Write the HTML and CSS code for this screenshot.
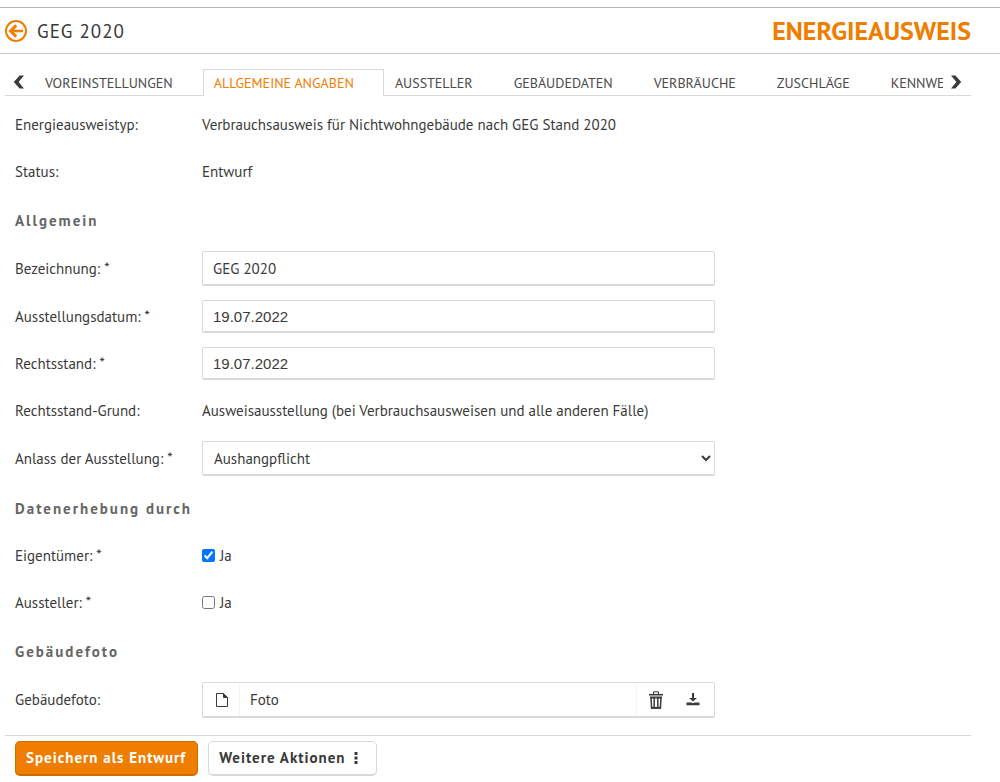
FILE: index.html
```html
<!DOCTYPE html>
<html lang="de">
<head>
    <meta charset="UTF-8">
    <title>Energieausweis</title>
    <link rel="stylesheet" href="styles.css">
</head>
<body>
<header class="page-header">
    <a class="back" href="#" aria-label="Zurück">
        <svg width="22" height="22" viewBox="0 0 22 22" fill="none" stroke="#ef7d00">
            <circle cx="11" cy="11" r="10" stroke-width="2"/>
            <path d="M5.5 11H18" stroke-width="2.6"/>
            <path d="M11.2 5.4L5.6 11l5.6 5.6" stroke-width="3"/>
        </svg>
    </a>
    <h1>GEG 2020</h1>
    <span class="brand">ENERGIEAUSWEIS</span>
</header>
<main>
<nav class="tabs">
    <button type="button" class="scroll prev" aria-label="Vorherige">
        <svg width="12" height="14" viewBox="0 0 12 14" fill="#3a3a3a"><path d="M6.600.5H11L5.600 7l5.400 6.500H6.600L.8 7z"/></svg>
    </button>
    <div class="tab-list">
        <a href="#">VOREINSTELLUNGEN</a>
        <a href="#" class="active">ALLGEMEINE ANGABEN</a>
        <a href="#">AUSSTELLER</a>
        <a href="#">GEBÄUDEDATEN</a>
        <a href="#">VERBRÄUCHE</a>
        <a href="#">ZUSCHLÄGE</a>
        <a href="#">KENNWERTE</a>
    </div>
    <button type="button" class="scroll next" aria-label="Nächste">
        <svg width="12" height="14" viewBox="0 0 12 14" fill="#3a3a3a"><path d="M5.400.5H1L6.400 7 1 13.500h4.400L11.200 7z"/></svg>
    </button>
</nav>
<form id="ausweis">
    <div class="row"><span class="label">Energieausweistyp:</span><span>Verbrauchsausweis für Nichtwohngebäude nach GEG Stand 2020</span></div>
    <div class="row"><span class="label">Status:</span><span>Entwurf</span></div>

    <h2>Allgemein</h2>
    <div class="row"><label class="label" for="bezeichnung">Bezeichnung: *</label><input class="field tall" type="text" id="bezeichnung" value="GEG 2020"></div>
    <div class="row"><label class="label" for="datum">Ausstellungsdatum: *</label><input class="field date" type="text" id="datum" value="19.07.2022"></div>
    <div class="row"><label class="label" for="rechtsstand">Rechtsstand: *</label><input class="field date" type="text" id="rechtsstand" value="19.07.2022"></div>
    <div class="row"><span class="label">Rechtsstand-Grund:</span><span>Ausweisausstellung (bei Verbrauchsausweisen und alle anderen Fälle)</span></div>
    <div class="row"><label class="label" for="anlass">Anlass der Ausstellung: *</label>
        <select class="field tall" id="anlass"><option>Aushangpflicht</option></select>
    </div>

    <h2>Datenerhebung durch</h2>
    <div class="row"><span class="label">Eigentümer: *</span><label class="check"><input type="checkbox" checked>Ja</label></div>
    <div class="row"><span class="label">Aussteller: *</span><label class="check"><input type="checkbox">Ja</label></div>

    <h2>Gebäudefoto</h2>
    <div class="row"><span class="label">Gebäudefoto:</span>
        <div class="field file">
            <span class="file-icon">
                <svg width="12" height="14" viewBox="0 0 12 14" fill="none" stroke="#3a3a3a"><path d="M.5.5h7l4 4v9H.5z"/><path d="M7.5.5v4h4z" fill="#3a3a3a"/></svg>
            </span>
            <span class="file-name">Foto</span>
            <button type="button" aria-label="Löschen">
                <svg width="14" height="18" viewBox="0 0 14 18" fill="none" stroke="#3a3a3a"><path d="M4.5 3V.8h5V3"/><path d="M0 3.7h14" stroke-width="1.6"/><path d="M1 6.5h12" stroke-width="2"/><path d="M2 6l.6 11h8.8L12 6M5.2 7v9M8.8 7v9" stroke-width="1.5"/><path d="M2 16.8h10" stroke-width="1.8"/></svg>
            </button>
            <button type="button" aria-label="Herunterladen">
                <svg width="14" height="13" viewBox="0 0 14 13" fill="#3a3a3a"><path d="M6 0h2v5h3L7 8.6 3 5h3zM.5 9.5h5L7 10.300l1.500-.8h5v2.800H.5z"/></svg>
            </button>
        </div>
    </div>
</form>
<footer class="actions">
    <button type="submit" form="ausweis" class="btn primary">Speichern als Entwurf</button>
    <button type="button" class="btn more">Weitere Aktionen
        <svg width="4" height="12" viewBox="0 0 4 12" fill="#3a3a3a"><path d="M.5 0h3v3h-3zM.5 4.5h3v3h-3zM.5 9h3v3h-3z"/></svg>
    </button>
</footer>
</main>
</body>
</html>
```

FILE: styles.css
```css
*{box-sizing: border-box;}
body{margin: 0;padding-top: 7px;background: #fff;color: #3a3a3a;font: 15px/20px "PT Sans","Noto Sans",sans-serif;}
h1,h2{margin: 0;}
button,input,select{font: inherit;color: inherit;}
svg{display: block;}
main{padding: 0 29px 0 5px;}

.page-header{
    display: flex;align-items: center;
    height: 47px;padding: 0 29px 0 5px;
    border-top: 1px solid #b5b5b5;border-bottom: 1px solid #c8c8c8;
}
.page-header h1{margin-left: 10px;font-size: 19px;font-weight: 400;line-height: 18px;letter-spacing: 1px;}
.brand{margin-left: auto;color: #ef7d00;font-size: 26px;font-weight: 700;}

.tabs{display: flex;height: 27px;margin-top: 15px;}
.tab-list{display: flex;flex: 1;min-width: 0;overflow: hidden;}
.tab-list a{
    flex: none;padding: 4px 30px 0 11px;
    border-bottom: 1px solid #d9d9d9;
    color: #4a4a4a;font-size: 14px;text-decoration: none;
}
.tab-list a.active{padding: 3px 29px 0 10px;border: 1px solid #d9d9d9;border-bottom: 0;color: #ef7d00;}
.scroll{padding: 0;border: 0;border-bottom: 1px solid #d9d9d9;background: none;}
.scroll.prev{width: 29px;padding-left: 8px;}
.scroll.next{width: 28px;padding-left: 7px;}

form{display: flex;flex-direction: column;gap: 14px;padding: 12px 10px 17px;}
h2{height: 35px;padding-top: 1px;color: #666;font-size: 15px;line-height: 35px;letter-spacing: 2px;}
.row{display: flex;align-items: center;min-height: 33px;}
.label{flex: none;width: 187px;}
.field{
    flex: 1;max-width: 513px;min-width: 0;height: 33px;padding: 0 10px;
    border: 1px solid #d9d9d9;border-bottom-width: 2px;border-radius: 2px;
    background: #fff;
}
.tall{height: 35px;}
.date{font-family: "Liberation Sans",Arial,sans-serif;}
select.field{padding: 0 0 0 7px;}
.check{display: flex;align-items: center;}
.check input{width: 13px;height: 13px;margin: 0 5px 0 0;}
.file{display: flex;align-items: center;height: 36px;padding: 0 2px 0 0;}
.file-icon{display: flex;align-items: center;height: 100%;padding: 0 11px 0 13px;border-right: 1px solid #f5f5f5;}
.file-name{flex: 1;padding-left: 10px;}
.file button{display: flex;align-items: center;justify-content: center;width: 38px;height: 100%;padding: 0;border: 0;background: none;}
.file-name + button{border-left: 1px solid #f5f5f5;}

.actions{display: flex;gap: 10px;padding: 5px 10px;border-top: 1px solid #d9d9d9;}
.btn{
    display: flex;align-items: center;gap: 8px;
    height: 35px;padding: 0 11px 0 10px;
    border: 1px solid #d9d9d9;border-bottom-width: 2px;border-radius: 5px;
    background: #fff;font-weight: 700;letter-spacing: 1px;
}
.btn.more{padding-right: 18px;}
.btn.primary{border-color: #d06d00;background: #ef7d00;color: #fff;}
```
